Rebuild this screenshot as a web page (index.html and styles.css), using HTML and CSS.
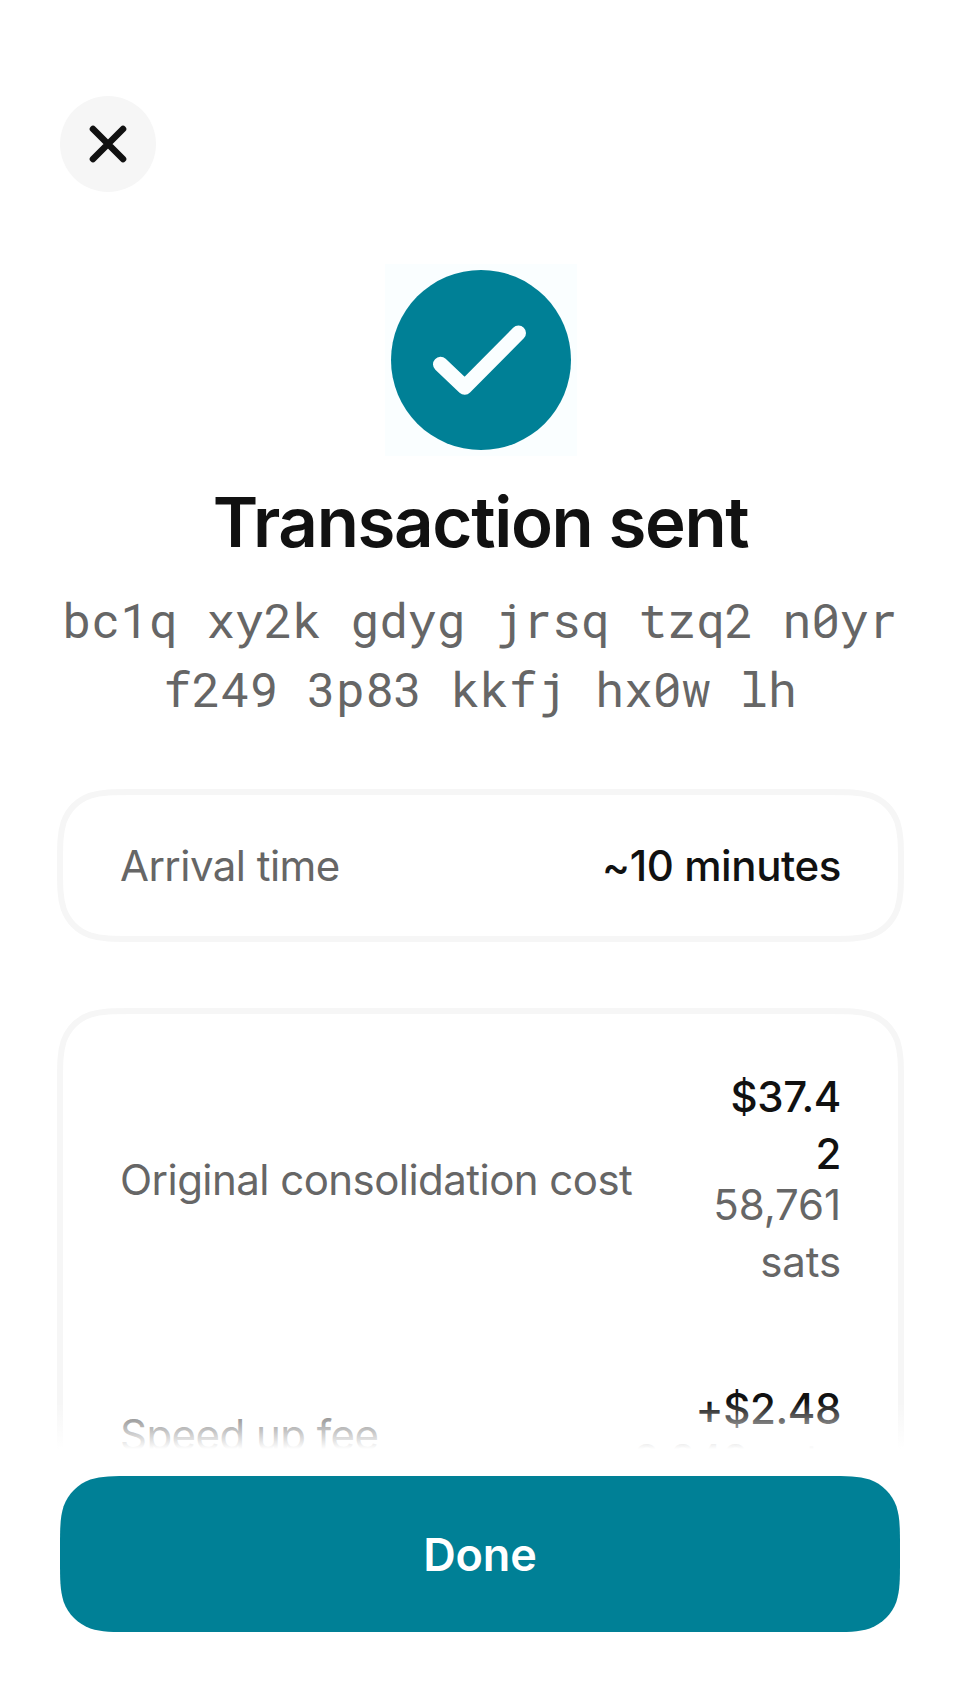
FILE: index.html
```html
<!DOCTYPE html>
<html lang="en">
<head>
<meta charset="utf-8">
<title>Transaction sent</title>
<link rel="stylesheet" href="styles.css">
</head>
<body>
<main class="screen">
  <div class="content">
    <button class="close" aria-label="Close">
      <svg width="96" height="96" viewBox="0 0 96 96" fill="none" stroke="#111" stroke-width="6.6" stroke-linecap="round"><path d="M33 33 63 63M63 33 33 63"/></svg>
    </button>
    <div class="badge">
      <svg width="192" height="192" viewBox="0 0 192 192" fill="none"><circle cx="96" cy="96" r="90" fill="#008096"/><path d="M55.5 100.3 79.7 123.2 133.5 69" stroke="#fafeff" stroke-width="15" stroke-linecap="round" stroke-linejoin="round"/></svg>
    </div>
    <h1 class="title">Transaction sent</h1>
    <p class="address">bc1q xy2k gdyg jrsq tzq2 n0yr f249 3p83 kkfj hx0w lh</p>
    <section class="card card-arrival">
      <svg class="frame" width="847" height="153" viewBox="-3 -3 847 153"><path d="M73.4 0H767.6C788.75 0 799.3 0 810.7 3.6C823.1 8.1 832.9 17.9 837.4 30.3C841 41.7 841 52.25 841 73.4V73.6C841 94.75 841 105.3 837.4 116.7C832.9 129.1 823.1 138.9 810.7 143.4C799.3 147 788.75 147 767.6 147H73.4C52.25 147 41.7 147 30.3 143.4C17.9 138.9 8.1 129.1 3.6 116.7C0 105.3 0 94.75 0 73.6V73.4C0 52.25 0 41.7 3.6 30.3C8.1 17.9 17.9 8.1 30.3 3.6C41.7 0 52.25 0 73.4 0Z"/></svg>
      <span class="label">Arrival time</span>
      <span class="amount">~10 minutes</span>
    </section>
    <section class="card card-costs">
      <svg class="frame" width="847" height="600" viewBox="-3 -3 847 600"><path d="M0 600V73.4C0 52.25 0 41.7 3.6 30.3C8.1 17.9 17.9 8.1 30.3 3.6C41.7 0 52.25 0 73.4 0H767.6C788.75 0 799.3 0 810.7 3.6C823.1 8.1 832.9 17.9 837.4 30.3C841 41.7 841 52.25 841 73.4V600"/></svg>
      <div class="row">
        <span class="label">Original consolidation cost</span>
        <div class="values narrow"><span class="amount">$37.42</span><span class="sats">58,761 sats</span></div>
      </div>
      <div class="row">
        <span class="label">Speed up fee</span>
        <div class="values"><span class="amount">+$2.48</span><span class="sats">3,848 sats</span></div>
      </div>
    </section>
    <div class="fade"></div>
  </div>
  <footer class="footer"><button class="done">Done</button></footer>
</main>
</body>
</html>
```
FILE: styles.css
```css
* { box-sizing: border-box; }
body { margin: 0; background: #fff; font-family: Inter, "Liberation Sans", sans-serif; color: #111; }
button { border: 0; padding: 0; font: inherit; }
.screen { width: 960px; height: 1704px; display: flex; flex-direction: column; overflow: hidden; }
.content { position: relative; height: 1449px; padding: 96px 56px 0 57px; display: flex; flex-direction: column; overflow: hidden; }
.close { width: 96px; height: 96px; flex: none; margin-left: 3px; border-radius: 50%; background: #f6f6f6; }
.close svg { display: block; }
.badge { width: 192px; height: 192px; flex: none; margin: 72px 0 0 328px; background: #fafeff; }
.badge svg { display: block; }
.title { margin: 24px 0 0; line-height: 84px; font-size: 69px; font-weight: 600; letter-spacing: -1.35px; text-align: center; }
.address { margin: 21px 0 0; padding: 0 4px 0 3px; line-height: 69px; font-family: "Roboto Mono", "DejaVu Sans Mono", monospace; font-size: 48px; color: #666; text-align: center; }
.card { position: relative; flex: none; padding: 0 63px; font-size: 42px; line-height: 57px; }
.card-arrival { height: 153px; margin-top: 66px; display: flex; align-items: center; justify-content: space-between; }
.card-costs { height: 600px; margin-top: 66px; padding-top: 60px; }
.frame { position: absolute; left: 0; top: 0; fill: none; stroke: #f6f6f6; stroke-width: 6; }
.label, .sats { color: #666; }
.label { letter-spacing: -0.54px; }
.amount { font-weight: 500; letter-spacing: -0.4px; }
.row { display: flex; align-items: center; justify-content: space-between; margin-bottom: 90px; }
.values { display: flex; flex-direction: column; text-align: right; }
.narrow { width: 130px; overflow-wrap: anywhere; }
.sats { margin-top: -6px; letter-spacing: -0.1px; }
.fade { position: absolute; left: 0; right: 0; bottom: 0; height: 47px; background: linear-gradient(rgba(255,255,255,0), #fff); }
.footer { padding: 27px 60px 0; }
.done { display: block; width: 840px; height: 156px; background: #008096; color: #fff; font-size: 45px; font-weight: 600; letter-spacing: -0.15px; clip-path: path("M73.4 0H766.6C787.75 0 798.3 0 809.7 3.6C822.1 8.1 831.9 17.9 836.4 30.3C840 41.7 840 52.25 840 73.4V82.6C840 103.75 840 114.3 836.4 125.7C831.9 138.1 822.1 147.9 809.7 152.4C798.3 156 787.75 156 766.6 156H73.4C52.25 156 41.7 156 30.3 152.4C17.9 147.9 8.1 138.1 3.6 125.7C0 114.3 0 103.75 0 82.6V73.4C0 52.25 0 41.7 3.6 30.3C8.1 17.9 17.9 8.1 30.3 3.6C41.7 0 52.25 0 73.4 0Z"); }
```
